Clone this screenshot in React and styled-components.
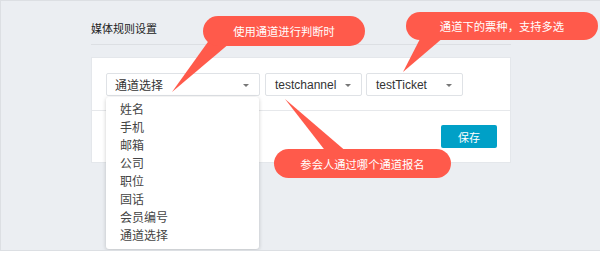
import React from 'react'
import styled, { createGlobalStyle } from 'styled-components'

const GlobalStyle = createGlobalStyle`
    html, body {
        margin:0;
        padding:0;
        background:#fff;
    }
    body {
        font-family:"Liberation Sans", "Noto Sans CJK SC", sans-serif;
    }
`
const Frame = styled.div`
    position:relative;
    width:600px;
    height:251px;
    box-sizing:border-box;
    border:1px solid #dcdfe3;
    border-right:none;
    background:#ebeef2;
    overflow:hidden;
    padding-left:90px;
`
const Header = styled.div`
    width:420px;
    padding-top:19px;
    padding-bottom:6px;
    border-bottom:1px solid #dcdfe3;
    font-size:11px;
    line-height:18px;
    color:#222;
`
const Panel = styled.section`
    position:relative;
    margin-top:12px;
    width:420px;
    box-sizing:border-box;
    background:#fff;
    border:1px solid #e4e7eb;
`
const Row = styled.div`
    display:flex;
    align-items:center;
    gap:4px;
    padding:15px 14px 14px;
    border-bottom:1px solid #e6e8eb;
`
const Select = styled.div`
    position:relative;
    width:${p => p.w}px;
    height:23px;
    box-sizing:border-box;
    border:1px solid #dfe2e6;
    border-radius:2px;
    background:#fff;
    display:flex;
    align-items:center;
    padding-left:${p => p.pad || 8}px;
    font-size:12px;
    color:#333;
    margin-right:${p => p.mr || 0}px;
`
const Caret = styled.span`
    position:absolute;
    right:10px;
    top:10px;
    width:0;
    height:0;
    border-left:3px solid transparent;
    border-right:3px solid transparent;
    border-top:3px solid #777;
`
const Menu = styled.ul`
    position:absolute;
    left:14px;
    top:39px;
    width:153px;
    margin:0;
    padding:4px 0;
    list-style:none;
    background:#fff;
    border-radius:3px;
    box-shadow:0 1px 4px rgba(0,0,0,.2);
    z-index:2;
`
const MenuItem = styled.li`
    height:18px;
    line-height:18px;
    padding-left:14px;
    font-size:12px;
    color:#444;
`
const Footer = styled.div`
    display:flex;
    justify-content:flex-end;
    padding:14px 13px 14px;
`
const SaveButton = styled.button`
    width:56px;
    height:23px;
    border:none;
    border-radius:2px;
    background:#00a0c7;
    color:#fff;
    font-family:inherit;
    font-size:11px;
    padding:0;
`
const Bubble = styled.div`
    position:absolute;
    left:${p => p.x}px;
    top:${p => p.y}px;
    width:${p => p.w}px;
    height:${p => p.h}px;
    border-radius:${p => p.h / 2}px;
    background:#ff5a4b;
    color:#fff;
    font-size:11.3px;
    display:flex;
    align-items:center;
    justify-content:center;
    z-index:4;
`
const Tails = styled.svg`
    position:absolute;
    left:0;
    top:0;
    z-index:3;
    pointer-events:none;
`

const items = ['姓名','手机','邮箱','公司','职位','固话','会员编号','通道选择']

const App = () => {
    return(
        <>
            <GlobalStyle />
            <Frame>
                <Header>媒体规则设置</Header>
                <Panel>
                    <Row>
                        <Select w={154} mr={1}>通道选择<Caret /></Select>
                        <Select w={97} pad={9}>testchannel<Caret /></Select>
                        <Select w={97} pad={9}>testTicket<Caret /></Select>
                    </Row>
                    <Footer>
                        <SaveButton>保存</SaveButton>
                    </Footer>
                    <Menu>
                        {items.map(item => <MenuItem key={item}>{item}</MenuItem>)}
                    </Menu>
                </Panel>
                <Tails width="600" height="253">
                    <polygon points="209,38 229,42 171,91" fill="#ff5a4b" />
                    <polygon points="421,34 443,36 402,71" fill="#ff5a4b" />
                    <polygon points="284,98 326,152 347,152" fill="#ff5a4b" />
                </Tails>
                <Bubble x={202} y={15} w={162} h={30}>使用通道进行判断时</Bubble>
                <Bubble x={405} y={11} w={192} h={28}>通道下的票种，支持多选</Bubble>
                <Bubble x={273} y={148} w={177} h={29}>参会人通过哪个通道报名</Bubble>
            </Frame>
        </>
    )
}

export default App
